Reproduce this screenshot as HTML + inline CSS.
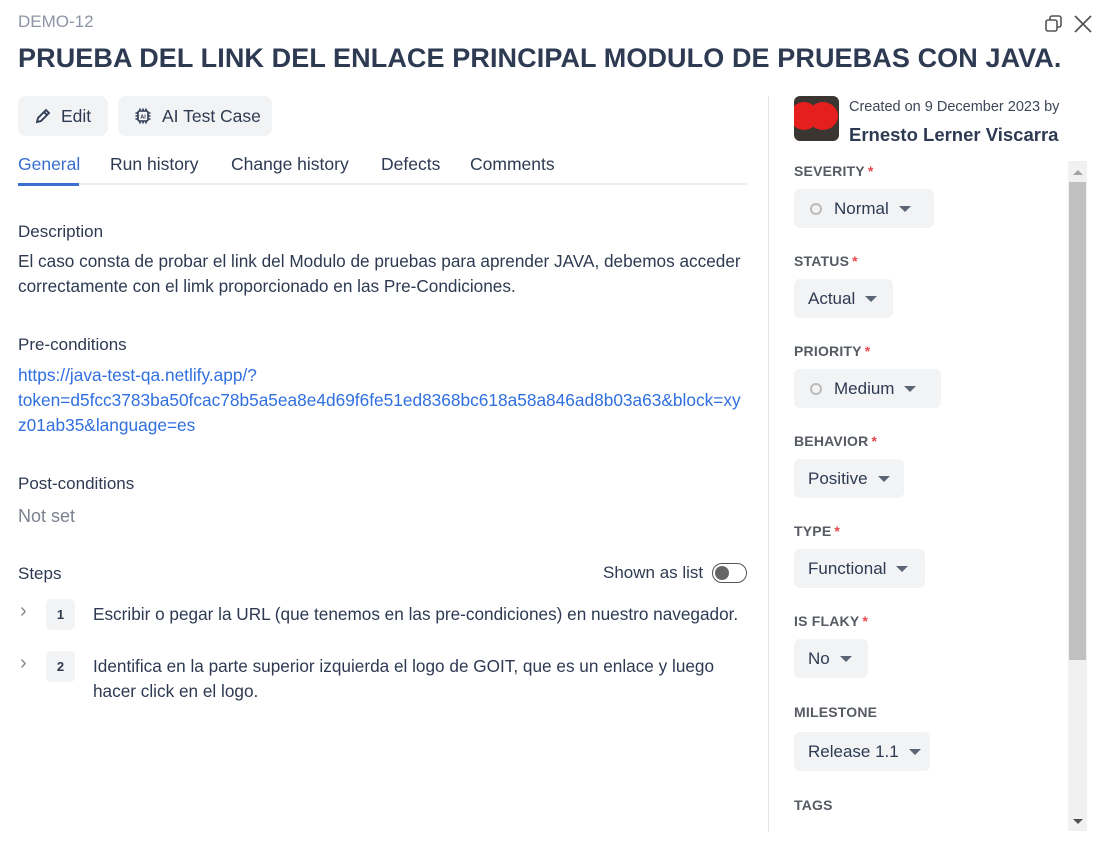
<!DOCTYPE html>
<html><head><meta charset="utf-8"><style>
*{margin:0;padding:0;box-sizing:border-box}
body{width:1103px;height:846px;background:#fff;font-family:"Liberation Sans",sans-serif;color:#2d3a52;position:relative;overflow:hidden}
.a{position:absolute;white-space:nowrap}
.btn{position:absolute;background:#f2f3f5;border-radius:8px;height:40px;font-size:17.5px;display:flex;align-items:center;color:#2d3a52}
.lbl{position:absolute;font-size:14px;font-weight:bold;color:#555a63;letter-spacing:0.2px}
.lbl b{color:#e5484d;margin-left:3px}
.sel{position:absolute;background:#f2f3f5;border-radius:6px;height:39px;font-size:17px;display:flex;align-items:center;padding-left:14px;color:#2d3a52}
.car{display:inline-block;width:0;height:0;border-left:6px solid transparent;border-right:6px solid transparent;border-top:6px solid #5b6475;margin-left:10px}
.dot{display:inline-block;width:12px;height:12px;border:2px solid #bbb;border-radius:50%;margin-right:12px;margin-left:8px}
.tab{position:absolute;top:154px;font-size:17.5px;color:#2d3a52}
.h{position:absolute;font-size:17px;color:#2d3a52}
.t{position:absolute;font-size:17.2px;color:#2d3a52;line-height:25px;white-space:nowrap}
.num{position:absolute;width:29px;height:31px;background:#f2f3f5;border-radius:5px;font-size:13px;font-weight:bold;display:flex;align-items:center;justify-content:center}
.chev{position:absolute;font-size:20px;color:#888}
</style></head><body>
<div class="a" style="left:18px;top:12px;font-size:17px;color:#8d95a5">DEMO-12</div>
<svg class="a" style="left:1044px;top:14px" width="20" height="20" viewBox="0 0 20 20" fill="none" stroke="#555" stroke-width="1.6"><rect x="2" y="6" width="11" height="11" rx="2"/><path d="M6 6V4a2 2 0 0 1 2-2h7a2 2 0 0 1 2 2v7a2 2 0 0 1-2 2h-2"/></svg>
<svg class="a" style="left:1073px;top:14px" width="20" height="20" viewBox="0 0 20 20" stroke="#555" stroke-width="1.8"><path d="M2 2L18 18M18 2L2 18"/></svg>
<div class="a" style="left:18px;top:43px;font-size:27px;font-weight:bold;color:#2d3a52;letter-spacing:0.1px">PRUEBA DEL LINK DEL ENLACE PRINCIPAL MODULO DE PRUEBAS CON JAVA.</div>

<div class="btn" style="left:18px;top:96px;width:90px;padding-left:16px"><svg width="18" height="18" viewBox="0 0 18 18" fill="none" stroke="#2d3a52" stroke-width="1.8"><path d="M3 15l1-4L12 3l3 3-8 8z M10 5l3 3"/></svg><span style="margin-left:9px">Edit</span></div>
<div class="btn" style="left:118px;top:96px;width:154px;padding-left:16px"><svg width="18" height="18" viewBox="0 0 18 18" fill="none" stroke="#2d3a52" stroke-width="1.6"><rect x="4" y="4" width="10" height="10" rx="1.5"/><path d="M6 1.5v2.5M9 1.5v2.5M12 1.5v2.5M6 14v2.5M9 14v2.5M12 14v2.5M1.5 6h2.5M1.5 9h2.5M1.5 12h2.5M14 6h2.5M14 9h2.5M14 12h2.5"/><text x="9" y="11.5" font-size="5.5" text-anchor="middle" fill="#2d3a52" stroke="none" font-family="Liberation Sans" font-weight="bold">AI</text></svg><span style="margin-left:10px">AI Test Case</span></div>

<div class="tab" style="left:18px;color:#3a6fd0">General</div>
<div class="tab" style="left:110px">Run history</div>
<div class="tab" style="left:231px">Change history</div>
<div class="tab" style="left:381px">Defects</div>
<div class="tab" style="left:470px">Comments</div>
<div class="a" style="left:18px;top:183px;width:729px;height:2px;background:#eceef1"></div>
<div class="a" style="left:18px;top:183px;width:61px;height:3px;background:#3a6fd0"></div>

<div class="h" style="top:222px;left:18px">Description</div>
<div class="t" style="top:249px;left:18px">El caso consta de probar el link del Modulo de pruebas para aprender JAVA, debemos acceder<br>correctamente con el limk proporcionado en las Pre-Condiciones.</div>
<div class="h" style="top:335px;left:18px">Pre-conditions</div>
<div class="t" style="top:363px;left:18px;color:#2f6fe0;font-size:17.3px">https://java-test-qa.netlify.app/?<br>token=d5fcc3783ba50fcac78b5a5ea8e4d69f6fe51ed8368bc618a58a846ad8b03a63&amp;block=xy<br>z01ab35&amp;language=es</div>
<div class="h" style="top:474px;left:18px">Post-conditions</div>
<div class="t" style="top:504px;left:18px;color:#7a8190;font-size:18px">Not set</div>
<div class="h" style="top:564px;left:18px">Steps</div>
<div class="a" style="top:563px;left:603px;font-size:17px">Shown as list</div>
<div class="a" style="left:712px;top:563px;width:35px;height:20px;border:1.5px solid #555;border-radius:10px"><div style="position:absolute;left:2px;top:2px;width:14px;height:14px;border-radius:50%;background:#666"></div></div>

<div class="chev" style="left:20px;top:600px">&#x203A;</div>
<div class="num" style="left:46px;top:599px">1</div>
<div class="t" style="left:93px;top:602px">Escribir o pegar la URL (que tenemos en las pre-condiciones) en nuestro navegador.</div>
<div class="chev" style="left:20px;top:652px">&#x203A;</div>
<div class="num" style="left:46px;top:651px">2</div>
<div class="t" style="left:93px;top:654px">Identifica en la parte superior izquierda el logo de GOIT, que es un enlace y luego<br>hacer click en el logo.</div>

<div class="a" style="left:768px;top:96px;width:1px;height:736px;background:#e3e5e8"></div>
<div class="a" style="left:794px;top:96px;width:45px;height:45px;border-radius:6px;background:#3a3530;overflow:hidden"><div style="position:absolute;left:-4px;top:6px;width:28px;height:28px;border-radius:50%;background:#e51e1e"></div><div style="position:absolute;left:14px;top:6px;width:30px;height:28px;border-radius:50%;background:#e51e1e"></div></div>
<div class="a" style="left:849px;top:99px;font-size:14.5px;color:#3c4658">Created on 9 December 2023 by</div>
<div class="a" style="left:849px;top:124px;font-size:18.5px;font-weight:bold;color:#2d3a52">Ernesto Lerner Viscarra</div>

<div class="a" style="left:1068px;top:161px;width:19px;height:670px;background:#f1f1f1"></div>
<div class="a" style="left:1069px;top:182px;width:17px;height:478px;background:#c1c1c1"></div>
<div class="a" style="left:1073px;top:170px;width:0;height:0;border-left:5px solid transparent;border-right:5px solid transparent;border-bottom:5px solid #a3a3a3"></div>
<div class="a" style="left:1073px;top:819px;width:0;height:0;border-left:5px solid transparent;border-right:5px solid transparent;border-top:5px solid #505050"></div>

<div class="lbl" style="left:794px;top:163px">SEVERITY<b>*</b></div>
<div class="sel" style="left:794px;top:189px;width:140px;padding-left:8px"><span class="dot"></span>Normal<span class="car"></span></div>
<div class="lbl" style="left:794px;top:253px">STATUS<b>*</b></div>
<div class="sel" style="left:794px;top:279px;width:99px">Actual<span class="car"></span></div>
<div class="lbl" style="left:794px;top:343px">PRIORITY<b>*</b></div>
<div class="sel" style="left:794px;top:369px;width:147px;padding-left:8px"><span class="dot"></span>Medium<span class="car"></span></div>
<div class="lbl" style="left:794px;top:433px">BEHAVIOR<b>*</b></div>
<div class="sel" style="left:794px;top:459px;width:110px">Positive<span class="car"></span></div>
<div class="lbl" style="left:794px;top:523px">TYPE<b>*</b></div>
<div class="sel" style="left:794px;top:549px;width:131px">Functional<span class="car"></span></div>
<div class="lbl" style="left:794px;top:613px">IS FLAKY<b>*</b></div>
<div class="sel" style="left:794px;top:639px;width:74px">No<span class="car"></span></div>
<div class="lbl" style="left:794px;top:704px">MILESTONE</div>
<div class="sel" style="left:794px;top:732px;width:136px">Release 1.1<span class="car"></span></div>
<div class="lbl" style="left:794px;top:797px">TAGS</div>
</body></html>
